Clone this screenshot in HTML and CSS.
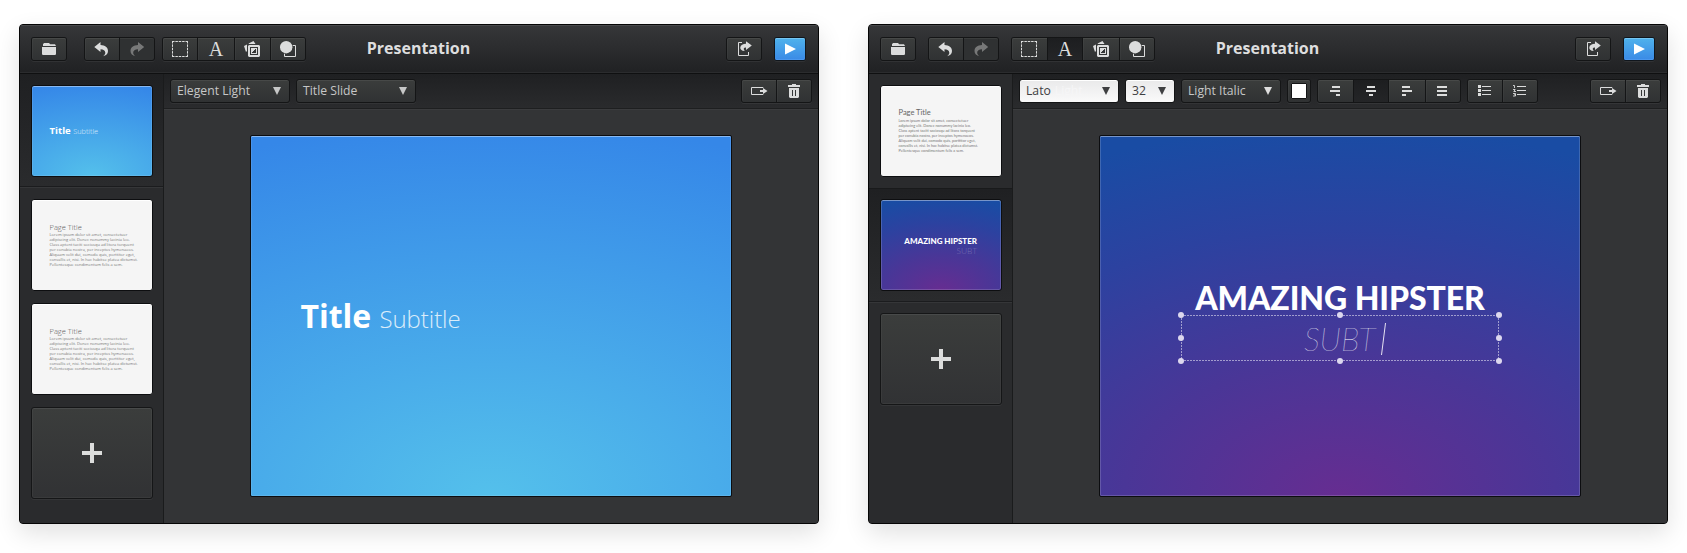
FILE: index.html
```
<!DOCTYPE html>
<html lang="en">
<head>
<meta charset="utf-8">
<title>Presentation</title>
<link rel="stylesheet" href="styles.css">
</head>
<body>
<svg class="defs" width="0" height="0" aria-hidden="true">
  <symbol id="folder" viewBox="0 0 16 16"><path d="M2 5V3.200L3 2h5l1.200 1.200H14L15 5zM1 6h14v7.200l-.8.8H1.800l-.8-.8z"/></symbol>
  <symbol id="undo" viewBox="0 0 16 16"><path d="M.3 6 6.500 1v3.100C11 4.200 14 6.500 14 10c0 2.800-2 4.700-5 5.200 1.600-1 2.300-2.100 2.300-3.400 0-2-1.800-3.500-4.800-3.500V11z"/></symbol>
  <symbol id="redo" viewBox="0 0 16 16"><use href="#undo" transform="matrix(-1 0 0 1 15.500 0)"/></symbol>
  <symbol id="marquee" viewBox="0 0 16 16"><path d="M0 .5h16M0 15.500h16M.5 0v16M15.500 0v16" fill="none" stroke="currentColor" stroke-dasharray="2.500 .875"/></symbol>
  <symbol id="images" viewBox="0 0 17 16"><path fill-rule="evenodd" d="M5 4h10l1 1v10l-1 1H5l-1-1V5zM6 6v8h8V6z"/><path fill-rule="evenodd" d="M7 7h6v6H7zM8 12h4V8h-1v1h-1v1H9v1H8z"/><path d="M0 5l3-1.500v6.500L2 11zM4.500 2.500l5-2.500L11.500 3H5z"/></symbol>
  <symbol id="shapes" viewBox="0 0 17 16"><path d="M4.500 4.500h11v11h-11z" fill="none" stroke="currentColor"/><circle cx="6.200" cy="6.200" r="6.800" fill="#343635"/><circle cx="6.200" cy="6.200" r="6.200"/></symbol>
  <symbol id="share" viewBox="0 0 16 16"><path d="M6 1.500H2.500v13h10V11" fill="none" stroke="currentColor"/><path d="M10 .3 15.800 4.500 10 9V6.500C7.600 6.400 7 7.600 8.700 10 5.500 9.800 4 8.200 4.300 6.200 4.700 3.900 7 2.700 10 2.700z"/></symbol>
  <symbol id="play" viewBox="0 0 16 16"><path d="M3 2.600 14 8 3 13.400z"/></symbol>
  <symbol id="export" viewBox="0 0 18 16"><path d="M13 5V4.500H1.500v7H13V11" fill="none" stroke="currentColor"/><path d="M10 7h3V5l4.500 3L13 11V9h-3z"/></symbol>
  <symbol id="trash" viewBox="0 0 16 16"><path fill-rule="evenodd" d="M6 1h4v1h4v2H2V2h4zM3 5h10v9l-1 1H4l-1-1zM6 7v6h1V7zM9 7v6h1V7z"/></symbol>
  <symbol id="al-right" viewBox="0 0 16 16"><path d="M5 3h8v2H5zM3 7h10v2H3zM9 11h4v2H9z"/></symbol>
  <symbol id="al-center" viewBox="0 0 16 16"><path d="M4 3h8v2H4zM3 7h10v2H3zM6 11h4v2H6z"/></symbol>
  <symbol id="al-left" viewBox="0 0 16 16"><path d="M3 3h8v2H3zM3 7h10v2H3zM3 11h4v2H3z"/></symbol>
  <symbol id="al-full" viewBox="0 0 16 16"><path d="M2 3h10v2H2zM2 7h10v2H2zM2 11h10v2H2z"/></symbol>
  <symbol id="bullets" viewBox="0 0 16 16"><path d="M1 2h3v3H1zM1 6h3v3H1zM1 10h3v3H1zM5 3h9v1H5zM5 7h9v1H5zM5 11h9v1H5z"/></symbol>
  <symbol id="numbers" viewBox="0 0 16 16"><path d="M5 3h9v1H5zM5 7h9v1H5zM5 11h9v1H5z"/><path d="M1 2.500h1.500V5M1 6.500h2.200L1.800 8.500H4M1 10.500h2.500v2.500H1M2 11.800h1.500" fill="none" stroke="currentColor" stroke-width=".9"/></symbol>
</svg>

<section class="window">
  <header class="header">
    <div class="group"><span class="btn"><svg class="icon"><use href="#folder"/></svg></span></div>
    <div class="group history"><span class="btn"><svg class="icon"><use href="#undo"/></svg></span><span class="btn off"><svg class="icon"><use href="#redo"/></svg></span></div>
    <div class="group tools"><span class="btn"><svg class="icon"><use href="#marquee"/></svg></span><span class="btn letter wide">A</span><span class="btn mid"><svg class="icon w17"><use href="#images"/></svg></span><span class="btn"><svg class="icon w17"><use href="#shapes"/></svg></span></div>
    <h1 class="heading">Presentation</h1>
    <div class="group share"><span class="btn"><svg class="icon"><use href="#share"/></svg></span></div>
    <div class="group play"><span class="btn"><svg class="icon"><use href="#play"/></svg></span></div>
  </header>
  <div class="body">
    <aside class="sidebar">
      <div class="cell selected first"><div class="thumb sky"><p class="mini-title"><b>Title</b> <span>Subtitle</span></p></div></div>
      <div class="cell">
        <div class="thumb paper"><div class="mini-page"><h2>Page Title</h2><p>Lorem ipsum dolor sit amet, consectetuer<br>adipiscing elit. Donec nonummy lacinia leo.<br>Class aptent taciti sociosqu ad litora torquent<br>per conubia nostra, per inceptos hymenaeos.<br>Aliquam velit dui, comodo quis, porttitor eget,<br>convallis et, nisi. In hac habitse platea dictumst.<br>Pellentesque condimentum felis a sem.</p></div></div>
        <div class="thumb paper"><div class="mini-page"><h2>Page Title</h2><p>Lorem ipsum dolor sit amet, consectetuer<br>adipiscing elit. Donec nonummy lacinia leo.<br>Class aptent taciti sociosqu ad litora torquent<br>per conubia nostra, per inceptos hymenaeos.<br>Aliquam velit dui, comodo quis, porttitor eget,<br>convallis et, nisi. In hac habitse platea dictumst.<br>Pellentesque condimentum felis a sem.</p></div></div>
        <div class="thumb add"><i class="plus"></i></div>
      </div>
    </aside>
    <main class="main">
      <div class="toolbar">
        <div class="select">Elegent Light<i class="tri"></i></div>
        <div class="select">Title Slide<i class="tri"></i></div>
        <div class="group end"><span class="btn"><svg class="icon w18"><use href="#export"/></svg></span><span class="btn"><svg class="icon"><use href="#trash"/></svg></span></div>
      </div>
      <div class="stage"><div class="slide sky"><p class="slide-title"><b>Title</b> <span>Subtitle</span></p></div></div>
    </main>
  </div>
</section>

<section class="window second">
  <header class="header">
    <div class="group"><span class="btn"><svg class="icon"><use href="#folder"/></svg></span></div>
    <div class="group history"><span class="btn"><svg class="icon"><use href="#undo"/></svg></span><span class="btn off"><svg class="icon"><use href="#redo"/></svg></span></div>
    <div class="group tools"><span class="btn mid"><svg class="icon"><use href="#marquee"/></svg></span><span class="btn letter on">A</span><span class="btn wide"><svg class="icon w17"><use href="#images"/></svg></span><span class="btn"><svg class="icon w17"><use href="#shapes"/></svg></span></div>
    <h1 class="heading">Presentation</h1>
    <div class="group share"><span class="btn"><svg class="icon"><use href="#share"/></svg></span></div>
    <div class="group play"><span class="btn"><svg class="icon"><use href="#play"/></svg></span></div>
  </header>
  <div class="body">
    <aside class="sidebar">
      <div class="cell top"><div class="thumb paper"><div class="mini-page lato"><h2>Page Title</h2><p>Lorem ipsum dolor sit amet, consectetuer<br>adipiscing elit. Donec nonummy lacinia leo.<br>Class aptent taciti sociosqu ad litora torquent<br>per conubia nostra, per inceptos hymenaeos.<br>Aliquam velit dui, comodo quis, porttitor eget,<br>convallis et, nisi. In hac habitse platea dictumst.<br>Pellentesque condimentum felis a sem.</p></div></div></div>
      <div class="cell selected"><div class="thumb dusk"><div class="mini-hip"><b>AMAZING HIPSTER</b><span>SUBT</span></div></div></div>
      <div class="cell last"><div class="thumb add"><i class="plus"></i></div></div>
    </aside>
    <main class="main">
      <div class="toolbar">
        <div class="select light font">Lato<span class="ghost">Light</span><i class="tri"></i></div>
        <div class="select light size">32<i class="tri"></i></div>
        <div class="select style">Light Italic<i class="tri"></i></div>
        <div class="group swatch"><span class="btn"><i class="color"></i></span></div>
        <div class="group aligns"><span class="btn mid"><svg class="icon"><use href="#al-right"/></svg></span><span class="btn on"><svg class="icon"><use href="#al-center"/></svg></span><span class="btn wide"><svg class="icon"><use href="#al-left"/></svg></span><span class="btn"><svg class="icon"><use href="#al-full"/></svg></span></div>
        <div class="group"><span class="btn"><svg class="icon"><use href="#bullets"/></svg></span><span class="btn"><svg class="icon"><use href="#numbers"/></svg></span></div>
        <div class="group end"><span class="btn"><svg class="icon w18"><use href="#export"/></svg></span><span class="btn"><svg class="icon"><use href="#trash"/></svg></span></div>
      </div>
      <div class="stage"><div class="slide dusk">
        <div class="hipster">AMAZING HIPSTER</div>
        <div class="textbox">
          <svg class="frame" width="326" height="54" viewBox="-4 -4 326 54"><path d="M0 .5h318M0 45.500h318M.5 0v46M317.500 0v46" fill="none" stroke="#d6d2ea" stroke-opacity=".65" stroke-dasharray="2 1"/><g fill="#dcd8ee"><circle cx="0" cy="0" r="3"/><circle cx="159" cy="0" r="3"/><circle cx="318" cy="0" r="3"/><circle cx="0" cy="23" r="3"/><circle cx="318" cy="23" r="3"/><circle cx="0" cy="46" r="3"/><circle cx="159" cy="46" r="3"/><circle cx="318" cy="46" r="3"/></g></svg>
          <span class="subt">SUBT</span><svg class="caret" width="8" height="34" viewBox="0 0 8 34"><path d="M1.500 33 5.500 1" stroke="#e6e2f2" fill="none"/></svg>
        </div>
      </div></div>
    </main>
  </div>
</section>
</body>
</html>
```
FILE: styles.css
```
* { box-sizing: border-box; }
body {
  margin: 0;
  height: 553px;
  padding: 24px 19px;
  display: flex;
  align-items: flex-start;
  gap: 49px;
  overflow: hidden;
  background: #fff;
  font-family: "Open Sans", "Noto Sans", sans-serif;
}
p, h1, h2 { margin: 0; }
.defs { position: absolute; }

.window {
  flex: none;
  width: 800px;
  height: 500px;
  display: flex;
  flex-direction: column;
  border: 1px solid #050505;
  border-radius: 4px;
  overflow: hidden;
  background: #2a2b2d;
  box-shadow: 0 9px 24px rgba(0, 0, 0, .12);
}

.header {
  position: relative;
  height: 49px;
  flex: none;
  display: flex;
  align-items: center;
  padding: 0 12px 0 11px;
  border-bottom: 1px solid #0f1011;
  background: linear-gradient(#363739, #202123);
  box-shadow: inset 0 1px #48494b, inset 0 -1px #2b2c2e;
}
.history { margin-left: 17px; }
.tools { margin-left: 7px; }
.second .history { margin-left: 12px; }
.second .tools { margin-left: 12px; }
.heading {
  position: absolute;
  left: 0;
  right: 1px;
  top: 12px;
  text-align: center;
  font-size: 16px;
  line-height: 22px;
  font-weight: 700;
  color: #dededf;
  pointer-events: none;
}
.share { margin-left: auto; }
.play { margin-left: 12px; }

.group {
  flex: none;
  display: flex;
  gap: 1px;
  height: 24px;
  padding: 1px;
  border-radius: 3px;
  background: #141516;
  box-shadow: 0 1px rgba(255, 255, 255, .06);
}
.btn {
  width: 34px;
  height: 22px;
  display: flex;
  align-items: center;
  justify-content: center;
  color: #dcdddd;
  background: linear-gradient(#3b3d3c, #303233);
  box-shadow: inset 0 1px #474948, inset 1px 0 rgba(255, 255, 255, .03);
}
.btn:first-child { border-radius: 2px 0 0 2px; }
.btn:last-child { border-radius: 0 2px 2px 0; }
.btn:only-child { border-radius: 2px; }
.mid { width: 35px; }
.mid:first-child { padding-right: 1px; }
.wide { width: 36px; }
.off { color: #777878; background: #2f3132; box-shadow: inset 0 1px #3a3c3c; }
.btn.on { background: linear-gradient(#1d1e20, #242527); box-shadow: none; }
.letter { font: 20px/22px "Liberation Serif", serif; }
.icon { width: 16px; height: 16px; fill: currentColor; overflow: visible; flex: none; }
.w17 { width: 17px; }
.w18 { width: 18px; }
.play { background: #10161d; }
.play .btn {
  width: 30px;
  color: #fff;
  background: linear-gradient(#4fb2ec, #3a8ae6);
  box-shadow: inset 0 1px #74c6f2, inset 0 -1px #4a97ee;
}

.body { flex: 1; display: flex; min-height: 0; }
.sidebar {
  width: 144px;
  flex: none;
  display: flex;
  flex-direction: column;
  border-right: 1px solid #1a1b1c;
  background: #2a2b2d;
}
.cell { display: flex; flex-direction: column; gap: 12px; padding: 11px; }
.selected {
  padding-top: 11px;
  padding-bottom: 9px;
  background: linear-gradient(#1f2022, #2a2b2d);
  border-bottom: 1px solid #1b1c1e;
}
.first { height: 113px; }
.cell + .selected { border-top: 1px solid #191a1b; padding-top: 10px; height: 114px; }
.selected + .cell { border-top: 1px solid #353638; }
.selected + .last { padding-top: 10px; }
.top { height: 114px; }

.thumb {
  width: 122px;
  height: 92px;
  flex: none;
  border: 1px solid #0d0e10;
  border-radius: 3px;
  overflow: hidden;
  padding: 22px 0 0 17.500px;
}
.paper { background: #f5f5f5; box-shadow: inset 0 1px #fff; }
.sky {
  background: radial-gradient(ellipse 135% 104% at 50% 100%, #54c0eb 0%, #3587e8 100%);
  box-shadow: inset 0 1px rgba(255, 255, 255, .35), inset 0 0 0 1px rgba(255, 255, 255, .1);
}
.dusk {
  background: radial-gradient(ellipse 125% 103% at 50% 100%, #662d91 0%, #4a3697 36%, #2c42a0 72%, #194ca4 100%);
  box-shadow: inset 0 1px rgba(255, 255, 255, .3), inset 0 0 0 1px rgba(255, 255, 255, .16);
}
.mini-title { margin-top: 15px; white-space: nowrap; color: #fff; font-size: 9.600px; line-height: 15px; }
.mini-title span { font-size: 7.300px; font-weight: 300; opacity: .8; }
.mini-page { color: #777; white-space: nowrap; }
.mini-page h2 { font-size: 7.500px; line-height: 10px; font-weight: 300; color: #555; }
.mini-page p { font-size: 4px; line-height: 5px; }
.mini-page.lato { font-family: Lato, sans-serif; }
.lato h2 { font-weight: 400; color: #666; }
.lato p { font-size: 3.870px; }
.mini-hip { width: 78.500px; display: flex; flex-direction: column; align-items: flex-end; padding-top: 14px; font-family: Lato, sans-serif; white-space: nowrap; }
.mini-hip b { font-size: 8px; line-height: 10px; font-weight: 900; color: #fff; }
.mini-hip span { font-size: 8.400px; line-height: 10px; font-weight: 300; color: rgba(255, 255, 255, .27); }
.add {
  display: flex;
  align-items: center;
  justify-content: center;
  padding: 0;
  border-color: #151617;
  background: linear-gradient(#3b3d3c, #313234);
  box-shadow: inset 0 1px #484a4a, inset 0 0 0 1px rgba(255, 255, 255, .04), 0 1px rgba(255, 255, 255, .05);
}
.plus {
  width: 20px;
  height: 20px;
  background: linear-gradient(#dcdddc, #dcdddc) center / 20px 4px no-repeat, linear-gradient(#dcdddc, #dcdddc) center / 4px 20px no-repeat;
}

.main { flex: 1; min-width: 0; display: flex; flex-direction: column; background: #333436; }
.toolbar {
  height: 35px;
  flex: none;
  display: flex;
  gap: 6px;
  padding: 5px 6px;
  border-bottom: 1px solid #1e1f20;
  background: linear-gradient(#1f2022, #2a2b2d);
  box-shadow: 0 1px #3b3c3e;
}
.select {
  width: 120px;
  height: 24px;
  flex: none;
  display: flex;
  align-items: center;
  padding: 0 8px 0 6px;
  border: 1px solid #141516;
  border-radius: 3px;
  background: linear-gradient(#3b3d3c, #303233);
  box-shadow: inset 0 1px #474948, 0 1px rgba(255, 255, 255, .05);
  color: #c6c7c7;
  font-size: 12.200px;
  line-height: 20px;
  white-space: nowrap;
}
.tri { margin-left: auto; width: 8px; height: 8px; background: currentColor; clip-path: polygon(0 0, 100% 0, 50% 100%); }
.light { color: #3f4042; background: linear-gradient(#e9e9ea, #fafafa); box-shadow: inset 0 1px #fff; }
.font { width: 100px; }
.ghost { margin-left: 4px; color: #f6f6f7; }
.size { width: 50px; }
.style { width: 100px; }
.style .tri { color: #dedede; }
.swatch .btn { width: 22px; }
.color { width: 16px; height: 16px; background: #fff; border: 1px solid #131415; border-radius: 1px; }
.end { margin-left: auto; }

.stage { flex: 1; display: flex; align-items: center; justify-content: center; }
.slide { width: 482px; height: 362px; border: 1px solid #0c0d10; border-radius: 2px; overflow: hidden; }
.slide-title { padding: 158px 0 0 49.500px; color: #fff; font-size: 32px; line-height: 44px; letter-spacing: -.05px; white-space: nowrap; }
.slide-title span { font-size: 24px; font-weight: 300; opacity: .8; }
.hipster {
  padding-top: 143px;
  text-align: center;
  font: 900 32px/38px Lato, sans-serif;
  letter-spacing: -.07px;
  color: #fff;
  white-space: nowrap;
}
.textbox { position: relative; width: 318px; height: 46px; margin: -2px auto 0; padding: 1px 0 0 12px; display: flex; align-items: center; justify-content: center; }
.frame { position: absolute; left: -4px; top: -4px; }
.subt { font: italic 100 32px/38px Lato, sans-serif; color: #fff; }
.caret { flex: none; margin-left: 5px; }
```
